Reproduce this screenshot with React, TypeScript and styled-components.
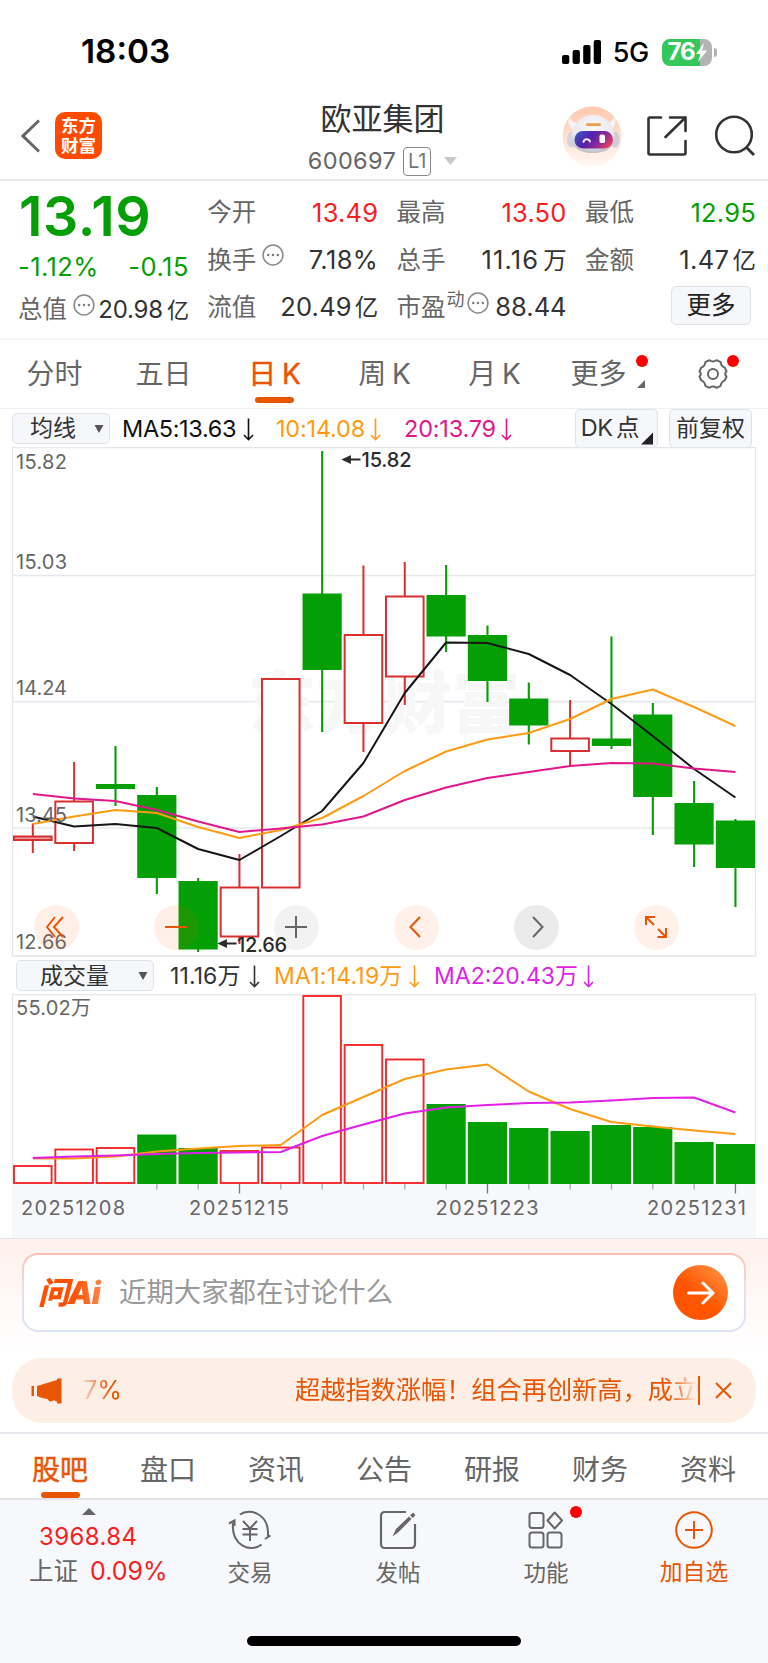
import React from "react";
import styled, { createGlobalStyle } from "styled-components";

const CJK = `Inter, "Noto Sans CJK SC", sans-serif`;
const ORANGE = "#ea5504";
const GREEN = "#049f04";
const RED = "#f8201f";

const Global = createGlobalStyle`
  * { box-sizing: border-box; }
  body { margin: 0; background: #fff; font-family: ${CJK}; color: #333; }
  svg { display: block; flex: none; }
`;

const Screen = styled.div`
  width: 768px;
  height: 1663px;
  overflow: hidden;
  display: flex;
  flex-direction: column;
  background: #fff;
`;

const Txt = styled.span<{ $s: number; $c?: string; $w?: number; $ls?: number; $ml?: number }>`
  font-size: ${(p) => p.$s}px;
  line-height: 1;
  color: ${(p) => p.$c || "#333"};
  font-weight: ${(p) => p.$w || 400};
  letter-spacing: ${(p) => p.$ls || 0}px;
  margin-left: ${(p) => p.$ml || 0}px;
  white-space: nowrap;
`;

/* status bar */
const StatusBar = styled.div`
  height: 102px;
  padding: 2px 51px 0 81px;
  display: flex;
  justify-content: space-between;
  align-items: center;
  flex: none;
`;
const StatusRight = styled.div`
  display: flex;
  align-items: center;
`;
const Battery = styled.div`
  width: 50px;
  height: 27px;
  border-radius: 8px;
  margin-left: 13px;
  background: linear-gradient(90deg, #34c759 76%, #b3b3b3 76%);
  display: flex;
  align-items: center;
  justify-content: center;
`;
const BatteryTip = styled.div`
  width: 3px;
  height: 9px;
  margin-left: 2px;
  border-radius: 0 3px 3px 0;
  background: #b3b3b3;
`;

/* header */
const Header = styled.header`
  height: 79px;
  flex: none;
  border-bottom: 2px solid #ebebed;
  display: grid;
  grid-template-columns: 240px 1fr 240px;
`;
const HeaderLeft = styled.div`
  display: flex;
  align-items: center;
  padding: 0 0 10px 21px;
  gap: 15px;
  height: 77px;
`;
const Logo = styled.div`
  width: 47px;
  height: 47px;
  border-radius: 10px;
  background: #ff4a00;
  display: flex;
  flex-direction: column;
  align-items: center;
  justify-content: center;
  gap: 2px;
`;
const HeaderTitle = styled.div`
  display: flex;
  flex-direction: column;
  align-items: center;
  padding: 1px 3px 0 0;
`;
const CodeRow = styled.div`
  display: flex;
  align-items: center;
  margin-top: 12px;
  height: 30px;
`;
const LevelBadge = styled.div`
  width: 28px;
  height: 29px;
  margin: 0 13px 0 7px;
  border: 1.5px solid #8a8a8a;
  border-radius: 4px;
  display: flex;
  align-items: center;
  justify-content: center;
`;
const HeaderRight = styled.div`
  display: flex;
  align-items: flex-start;
  justify-content: flex-end;
  padding: 4px 12px 0 0;
`;

/* quote */
const Quote = styled.section`
  height: 159px;
  flex: none;
  border-bottom: 2px solid #f3f3f5;
  padding: 0 12px 0 18px;
  display: grid;
  grid-template-columns: 171px 171px 170px 171px;
  column-gap: 18.3px;
`;
const QuoteCol = styled.div`
  display: flex;
  flex-direction: column;
  padding-top: 8px;
`;
const PriceBox = styled.div`
  height: 58px;
  display: flex;
  align-items: center;
  padding: 0 0 4px 1px;
`;
const QuoteRow = styled.div<{ $h?: number; $end?: boolean }>`
  height: ${(p) => p.$h || 47.3}px;
  display: flex;
  align-items: center;
  justify-content: ${(p) => (p.$end ? "flex-end" : "space-between")};
  padding: ${(p) => (p.$end ? "0 5px 3px 0" : "0")};
`;
const Label = styled.span`
  font-size: 24.5px;
  line-height: 1;
  color: #666;
  display: flex;
  align-items: center;
  white-space: nowrap;
`;
const InfoIcon = styled.span<{ $ml?: number }>`
  display: inline-flex;
  margin: 0 0 9px ${(p) => p.$ml ?? 6}px;
`;
const Sup = styled.span`
  font-size: 18px;
  margin: 0 0 15px 1px;
`;
const Unit = styled.span<{ $ml: number }>`
  font-size: 0.92em;
  letter-spacing: 0;
  margin-left: ${(p) => p.$ml}px;
`;
const SoftButton = styled.div<{ $w: number; $h: number; $ml?: number; $pr?: number }>`
  width: ${(p) => p.$w}px;
  height: ${(p) => p.$h}px;
  margin-left: ${(p) => p.$ml || 0}px;
  padding-right: ${(p) => p.$pr || 0}px;
  border: 1px solid #dfe1e8;
  border-radius: 5px;
  background: #f6f7fa;
  display: flex;
  align-items: center;
  justify-content: center;
  position: relative;
  flex: none;
  word-spacing: -3px;
`;

/* period tabs */
const Periods = styled.nav`
  height: 69px;
  border-bottom: 1px solid #f0f0f2;
  display: grid;
  grid-template-columns: 109px 109px 113px 107px 113px 95px 134px;
  flex: none;
`;
const Period = styled.div<{ $on?: boolean }>`
  position: relative;
  display: flex;
  align-items: center;
  justify-content: center;
  font-size: 28px;
  line-height: 1;
  padding-bottom: 1px;
  color: ${(p) => (p.$on ? ORANGE : "#666")};
  -webkit-text-stroke: ${(p) => (p.$on ? "0.45px" : "0")};
  white-space: nowrap;
  word-spacing: -2px;
`;
const Underline = styled.i<{ $b: number; $w: number }>`
  position: absolute;
  bottom: ${(p) => p.$b}px;
  left: 50%;
  margin-left: ${(p) => -p.$w / 2}px;
  width: ${(p) => p.$w}px;
  height: 6px;
  border-radius: 3px;
  background: ${ORANGE};
`;
const Dot = styled.i<{ $x: number; $y: number }>`
  position: absolute;
  left: ${(p) => p.$x}px;
  top: ${(p) => p.$y}px;
  width: 12px;
  height: 12px;
  border-radius: 50%;
  background: #fe0000;
`;
const Corner = styled.i<{ $x: number; $y: number; $s: number; $c: string }>`
  position: absolute;
  left: ${(p) => p.$x}px;
  top: ${(p) => p.$y}px;
  width: ${(p) => p.$s}px;
  height: ${(p) => p.$s}px;
  background: ${(p) => p.$c};
  clip-path: polygon(100% 0, 100% 100%, 0 100%);
`;

/* indicator rows */
const IndicatorRow = styled.div<{ $h: number; $pl: number }>`
  height: ${(p) => p.$h}px;
  padding-left: ${(p) => p.$pl}px;
  display: flex;
  align-items: center;
  flex: none;
`;
const Select = styled.div<{ $w: number }>`
  width: ${(p) => p.$w}px;
  height: 31px;
  border: 1px solid #dfe1e8;
  border-radius: 5px;
  background: #f6f7fa;
  display: flex;
  align-items: center;
  justify-content: space-between;
  padding: 1px 5px 0 ${(p) => (p.$w > 120 ? 23 : 17)}px;
  flex: none;
`;
const Item = styled.div<{ $w: number; $ml: number }>`
  width: ${(p) => p.$w}px;
  margin-left: ${(p) => p.$ml}px;
  padding-top: 2px;
  display: flex;
  align-items: center;
  justify-content: space-between;
  flex: none;
`;

const ChartWrap = styled.div`
  position: relative;
  flex: none;
`;
const ChartButtons = styled.div`
  position: absolute;
  left: 33.5px;
  top: 457.5px;
  display: flex;
  gap: 75px;
`;
const RoundButton = styled.div<{ $bg: string }>`
  width: 45px;
  height: 45px;
  border-radius: 50%;
  background: ${(p) => p.$bg};
  display: flex;
  align-items: center;
  justify-content: center;
`;

/* AI prompt and notice */
const AiSection = styled.section`
  height: 196px;
  flex: none;
  border-top: 1px solid #e3e2ea;
  border-bottom: 2px solid #e8e8ee;
  background: linear-gradient(180deg, #fff1ec 0, #ffffff 112px);
  padding: 14px 12px 0;
`;
const AiBorder = styled.div`
  margin: 0 10px;
  height: 79px;
  border-radius: 16px;
  padding: 2px;
  background: linear-gradient(180deg, #ffbdb2 0, #f0dbe4 40%, #dbe3f6 100%);
`;
const AiBox = styled.div`
  height: 75px;
  border-radius: 14px;
  background: #fff;
  display: flex;
  align-items: center;
  padding: 0 16px 0 14px;
`;
const AiLogo = styled.span`
  width: 67px;
  font-size: 31px;
  line-height: 1.2;
  font-weight: 900;
  font-style: italic;
  letter-spacing: -1px;
  white-space: nowrap;
  color: transparent;
  background: linear-gradient(90deg, #ff5000 50%, #ff8a50);
  background-clip: text;
  -webkit-background-clip: text;
`;
const Go = styled.div`
  width: 55px;
  height: 55px;
  margin-left: auto;
  border-radius: 50%;
  background: linear-gradient(40deg, #ff5500 45%, #ff9a4c);
  display: flex;
  align-items: center;
  justify-content: center;
`;
const Notice = styled.div`
  margin-top: 26px;
  height: 65px;
  border-radius: 30px;
  background: #fdeee6;
  display: flex;
  align-items: center;
  padding: 0 23px 0 19px;
`;
const Ticker = styled.div`
  width: 620px;
  margin-left: 16px;
  display: flex;
  justify-content: space-between;
  padding: 6px 0 6px 5px;
  mask-image: linear-gradient(90deg, transparent 0, #000 32px, #000 592px, transparent 619px);
`;
const Bar = styled.i`
  width: 1.5px;
  height: 29px;
  background: ${ORANGE};
`;

/* section tabs */
const Sections = styled.nav`
  height: 66px;
  flex: none;
  border-bottom: 2px solid #e3e4e7;
  display: grid;
  grid-template-columns: repeat(7, 108px);
  padding-left: 6px;
`;
const Section = styled(Period)`
  padding-bottom: 0;
  padding-top: 8px;
`;

/* bottom bar */
const Bottom = styled.footer`
  height: 163px;
  flex: none;
  background: #f7f8fb;
  display: flex;
  flex-direction: column;
  justify-content: space-between;
  align-items: center;
  padding-bottom: 17px;
`;
const Actions = styled.div`
  width: 768px;
  display: grid;
  grid-template-columns: 176px 148px 148px 148px 148px;
`;
const Action = styled.div`
  display: flex;
  flex-direction: column;
  align-items: center;
  position: relative;
  padding-top: 10px;
  height: 84px;
  justify-content: space-between;
`;
const IndexAction = styled(Action)`
  align-items: flex-start;
  padding-top: 8px;
`;
const UpMark = styled.i`
  width: 14px;
  height: 7px;
  margin-left: 82px;
  background: #666;
  clip-path: polygon(50% 0, 100% 100%, 0 100%);
`;
const IndexRow = styled.div`
  display: flex;
  align-items: center;
  gap: 12px;
  padding-left: 29px;
`;
const HomeBar = styled.div`
  width: 274px;
  height: 10px;
  border-radius: 5px;
  background: #000;
`;

const Info = ({ ml }: { ml?: number }) => (
  <InfoIcon $ml={ml}>
    <svg width="22" height="22" viewBox="0 0 22 22">
      <circle cx="11" cy="11" r="9.9" fill="none" stroke="#888" strokeWidth="1.5" />
      <g fill="#777"><circle cx="6.2" cy="11" r="1.2" /><circle cx="11" cy="11" r="1.2" /><circle cx="15.8" cy="11" r="1.2" /></g>
    </svg>
  </InfoIcon>
);
const Value = ({ n, u, c, gap = 3, ls = 0.2 }: { n: string; u?: string; c?: string; gap?: number; ls?: number }) => (
  <Txt $s={25.5} $c={c} $ls={ls}>{n}{u && <Unit $ml={gap}>{u}</Unit>}</Txt>
);
const Down = ({ c }: { c: string }) => (
  <svg width="11" height="23" viewBox="0 0 11 23" fill="none" stroke={c} strokeWidth="1.6">
    <path d="M5.5 0.5V21.5M1 17L5.5 21.7L10 17" />
  </svg>
);
const Caret = () => (
  <svg width="10" height="8" viewBox="0 0 10 8"><path d="M0.5 0H9.5L5 8Z" fill="#555" /></svg>
);

const Robot = () => (
  <svg width="60" height="61" viewBox="0 0 60 61">
    <defs>
      <linearGradient id="halo" x1="0" y1="0" x2="0" y2="1"><stop offset="0" stopColor="#ffc9ae" /><stop offset="1" stopColor="#fff8f4" /></linearGradient>
      <linearGradient id="visor" x1="0" y1="0.2" x2="1" y2="0.6"><stop offset="0" stopColor="#3a55c4" /><stop offset="0.4" stopColor="#5420a8" /><stop offset="0.7" stopColor="#8a2a9c" /><stop offset="1" stopColor="#e0455c" /></linearGradient>
      <radialGradient id="shell" cx="0.5" cy="0.3" r="0.75"><stop offset="0" stopColor="#f8f8fa" /><stop offset="0.65" stopColor="#e9e8ed" /><stop offset="1" stopColor="#b5b5c0" /></radialGradient>
    </defs>
    <ellipse cx="30" cy="30.5" rx="29.5" ry="30" fill="url(#halo)" />
    <path d="M13 24C7 21 5 16 7.5 11.5C9 15 12 17 16 17ZM47 24C53 21 55 16 52.5 11C51 15 48 17 44 17Z" fill="#f6f4f6" />
    <ellipse cx="9.5" cy="33.5" rx="4.5" ry="8" fill="#d6d4dc" />
    <ellipse cx="53" cy="33.5" rx="4.5" ry="8" fill="#cfccd6" />
    <path d="M31 9C42 9 49 16 52 25C55 38 48 47 31 47C15 47 7 39 10 26C13 16 20 9 31 9Z" fill="url(#shell)" />
    <rect x="24" y="17.3" width="15" height="2.8" rx="1.4" fill="#ee9a4e" />
    <rect x="12.5" y="25" width="38.5" height="17.5" rx="8.5" fill="url(#visor)" />
    <path d="M21.5 36C22 32.5 27 32.5 28 35.5" fill="none" stroke="#f4eaff" strokeWidth="1.9" strokeLinecap="round" />
    <rect x="37.5" y="28.5" width="5.5" height="8.5" rx="1.8" fill="#fff" />
  </svg>
);

const CANDLE_RED = "#d82f31";
const cx = (i: number) => 32.8 + 41.33 * i;

/* [rising, body top, body bottom, high, low] */
const candles: [number, number, number, number, number][] = [
  [1, 836.5, 840, 823.5, 853], [1, 801.5, 843, 762, 851], [0, 784, 789, 746, 806],
  [0, 795, 878, 787, 894], [0, 881, 949.5, 878, 952], [1, 887.5, 936.5, 854, 944],
  [1, 679, 887.5, 679, 887], [0, 593.5, 670, 451, 732], [1, 635, 723, 565.5, 752],
  [1, 596.5, 676.5, 562, 705], [0, 595, 636.5, 565, 652], [0, 635, 681, 625.5, 702],
  [0, 698.5, 725.5, 682.5, 744.5], [1, 738.5, 751, 700, 766], [0, 738.5, 746, 636.5, 749],
  [0, 714.5, 797, 703, 835], [0, 803, 844.5, 781, 867], [0, 820.5, 868, 819, 907],
];
const ma5 = [816.5, 826.5, 824, 828, 849, 860, 836, 811, 763, 693, 642.5, 643, 654, 675, 704, 736, 769, 797.5];
const ma10 = [824, 816.5, 810, 813, 827, 838, 830, 818, 796, 771, 751.5, 739.5, 733, 719, 699, 689.5, 707, 726];
const ma20 = [794, 798.5, 801, 810, 821.5, 832, 828.5, 824.5, 816.5, 800, 787.5, 778, 772, 766, 763, 763.5, 768.5, 772];
const vols = [1166, 1149.5, 1148, 1134.5, 1148, 1151, 1147.5, 996, 1045, 1059.5, 1104, 1122, 1128, 1131, 1125, 1127, 1142, 1144];
const risingVols = [0, 1, 2, 5, 6, 7, 8, 9];
const vma1 = [1158.5, 1158.5, 1156.5, 1151.5, 1148.5, 1146, 1145, 1115, 1097, 1079, 1069.5, 1064.5, 1091.5, 1109, 1122, 1126.5, 1130.5, 1134];
const vma2 = [1158, 1156.5, 1155.5, 1154, 1153, 1152.5, 1152, 1136, 1124.5, 1113.5, 1107.5, 1105, 1103, 1102.5, 1100.5, 1098, 1097.5, 1112.5];

const Line = ({ ys, c }: { ys: number[]; c: string }) => (
  <polyline points={ys.map((y, i) => `${cx(i)},${y}`).join(" ")} fill="none" stroke={c} strokeWidth="2" strokeLinejoin="round" />
);

const AxisText = styled.text`
  font-family: ${CJK};
  font-size: 20px;
  fill: #666;
`;
const MarkText = styled(AxisText)`
  fill: #2b2b2b;
  font-weight: 500;
`;

const PriceChart = () => (
  <svg width="768" height="510" viewBox="0 447 768 510">
    <g fill="none" stroke="#e3e5ea" strokeWidth="1.3">
      <path d="M12.5 447.5H755.5V956H12.5Z" />
      <path d="M12.5 575.5H755.5M12.5 701.7H755.5M12.5 828H755.5" strokeWidth="1.7" stroke="#e6e9ef" />
    </g>
    <text x="248" y="728" fontSize="68" fontWeight="900" fontFamily="Noto Sans CJK SC" fill="#f7f7f7" textLength="272">东方财富</text>
    {candles.map(([up, t, b, hi, lo], i) =>
      up ? (
        <g key={i} stroke={CANDLE_RED} strokeWidth="2" fill="none">
          <path d={`M${cx(i)} ${hi}V${t}M${cx(i)} ${b}V${lo}`} />
          <rect x={cx(i) - 18.8} y={t} width="37.6" height={b - t} fill={b - t < 5 ? "#e9a0a0" : "#fff"} />
        </g>
      ) : (
        <g key={i} fill={GREEN}>
          <rect x={cx(i) - 1} y={hi} width="2.1" height={lo - hi} />
          <rect x={cx(i) - 19.6} y={t} width="39.2" height={b - t} />
        </g>
      )
    )}
    <Line ys={ma5} c="#161616" />
    <Line ys={ma10} c="#ff9b12" />
    <Line ys={ma20} c="#e1178b" />
    <AxisText x="16" y="469" textLength="51">15.82</AxisText>
    <AxisText x="16" y="568.5" textLength="51">15.03</AxisText>
    <AxisText x="16" y="695" textLength="51">14.24</AxisText>
    <AxisText x="16" y="822" textLength="51">13.45</AxisText>
    <AxisText x="16" y="948.5" textLength="51">12.66</AxisText>
    <path d="M349 459.5H360.5M350 456.5L343.5 459.5L350 462.5Z" stroke="#2b2b2b" strokeWidth="1.8" fill="#2b2b2b" />
    <MarkText x="361.5" y="467" textLength="50">15.82</MarkText>
    <path d="M225 943.5H236.5M226 940.5L219.5 943.5L226 946.5Z" stroke="#2b2b2b" strokeWidth="1.8" fill="#2b2b2b" />
    <MarkText x="237" y="951.5" textLength="50">12.66</MarkText>
  </svg>
);

const VolumeChart = () => (
  <svg width="768" height="244" viewBox="0 994 768 244">
    <rect x="12" y="1184" width="744" height="54" fill="#f7f8fb" />
    <path d="M12.5 1184V994.5H755.5V1184" fill="none" stroke="#e3e5ea" strokeWidth="1.3" />
    {vols.map((y, i) =>
      risingVols.includes(i) ? (
        <rect key={i} x={cx(i) - 18.8} y={y} width="37.6" height={1183 - y} fill="none" stroke="#f4282a" strokeWidth="1.9" />
      ) : (
        <rect key={i} x={cx(i) - 19.6} y={y} width="39.2" height={1184 - y} fill={GREEN} />
      )
    )}
    {vols.map((_, i) =>
      i < 3 ? null : (
        <rect key={i} x={cx(i) - 0.6} y="1184" width="1.3" height={i % 6 === 5 ? 9.5 : 5.5} fill={i % 6 === 5 ? "#777" : "#aaa"} />
      )
    )}
    <Line ys={vma1} c="#ff9b12" />
    <Line ys={vma2} c="#e11fe6" />
    <AxisText x="16" y="1014.5" textLength="75">55.02万</AxisText>
    <AxisText x="21" y="1214.5" textLength="104">20251208</AxisText>
    <AxisText x="189" y="1214.5" textLength="100">20251215</AxisText>
    <AxisText x="435.5" y="1214.5" textLength="103">20251223</AxisText>
    <AxisText x="647" y="1214.5" textLength="99">20251231</AxisText>
  </svg>
);

const stroke = (c: string, w = 2) => ({ fill: "none", stroke: c, strokeWidth: w });
const ShareIcon = styled.svg`
  margin: 10px 0 0 25px;
`;
const SearchIcon = styled.svg`
  margin: 9px 0 0 28px;
`;
const CloseIcon = styled.svg`
  margin-left: 15px;
`;

export default function App() {
  return (
    <Screen>
      <Global />
      <StatusBar>
        <Txt $s={33.3} $w={600} $c="#000">18:03</Txt>
        <StatusRight>
          <svg width="39" height="24" viewBox="0 0 39 24">
            <rect x="0" y="15" width="7.3" height="9" rx="2" /><rect x="10.6" y="10" width="7.3" height="14" rx="2" />
            <rect x="21.2" y="5" width="7.3" height="19" rx="2" /><rect x="31.7" y="0" width="7.3" height="24" rx="2" />
          </svg>
          <Txt $s={27} $w={450} $c="#000" $ml={12} $ls={-0.3}>5G</Txt>
          <Battery>
            <Txt $s={24} $w={700} $c="#fff" $ls={-1}>76</Txt>
            <svg width="12" height="19" viewBox="0 0 12 19"><path d="M9 0L1 11H5.5L3 19L12 7.5H7.2Z" fill="#fff" /></svg>
          </Battery>
          <BatteryTip />
        </StatusRight>
      </StatusBar>

      <Header>
        <HeaderLeft>
          <svg width="19" height="34" viewBox="0 0 19 34"><path d="M18 1.5L2 17L18 32.5" {...stroke("#666", 3)} /></svg>
          <Logo>
            <Txt $s={17.5} $w={700} $c="#fff">东方</Txt>
            <Txt $s={17.5} $w={700} $c="#fff">财富</Txt>
          </Logo>
        </HeaderLeft>
        <HeaderTitle>
          <Txt $s={31}>欧亚集团</Txt>
          <CodeRow>
            <Txt $s={23.5} $c="#666" $ls={0.35}>600697</Txt>
            <LevelBadge><Txt $s={20} $c="#777">L1</Txt></LevelBadge>
            <svg width="13" height="8" viewBox="0 0 13 8"><path d="M0 0H13L6.5 8Z" fill="#c8c8c8" /></svg>
          </CodeRow>
        </HeaderTitle>
        <HeaderRight>
          <Robot />
          <ShareIcon width="40" height="40" viewBox="0 0 40 40">
            <g {...stroke("#333", 2.6)} strokeLinecap="round" strokeLinejoin="round">
              <path d="M14 1.5H3Q1.5 1.5 1.5 3V37Q1.5 38.5 3 38.5H37Q38.5 38.5 38.5 37V25" />
              <path d="M23 1.5H38.5V15M38.5 1.5L18.5 21" />
            </g>
          </ShareIcon>
          <SearchIcon width="41" height="41" viewBox="0 0 41 41">
            <circle cx="19" cy="19.5" r="17.8" {...stroke("#333", 2.6)} /><path d="M31.5 32.5L39 40" {...stroke("#333", 2.8)} />
          </SearchIcon>
        </HeaderRight>
      </Header>

      <Quote>
        <QuoteCol>
          <PriceBox><Txt $s={55.5} $w={600} $c={GREEN} $ls={0.6}>13.19</Txt></PriceBox>
          <QuoteRow $h={39}><Value n="-1.12%" c={GREEN} ls={0.4} /><Value n="-0.15" c={GREEN} ls={0.5} /></QuoteRow>
          <QuoteRow><Label>总值<Info /></Label><Txt $s={24} $ls={-0.2}>20.98<Unit $ml={4}>亿</Unit></Txt></QuoteRow>
        </QuoteCol>
        <QuoteCol>
          <QuoteRow><Label>今开</Label><Value n="13.49" c={RED} /></QuoteRow>
          <QuoteRow><Label>换手<Info /></Label><Value n="7.18%" ls={0.4} /></QuoteRow>
          <QuoteRow><Label>流值</Label><Value n="20.49" u="亿" /></QuoteRow>
        </QuoteCol>
        <QuoteCol>
          <QuoteRow><Label>最高</Label><Value n="13.50" c={RED} /></QuoteRow>
          <QuoteRow><Label>总手</Label><Value n="11.16" u="万" gap={4} ls={1.1} /></QuoteRow>
          <QuoteRow><Label>市盈<Sup>动</Sup><Info ml={2} /></Label><Value n="88.44" ls={0} /></QuoteRow>
        </QuoteCol>
        <QuoteCol>
          <QuoteRow><Label>最低</Label><Value n="12.95" c={GREEN} /></QuoteRow>
          <QuoteRow><Label>金额</Label><Value n="1.47" u="亿" gap={3} ls={0.4} /></QuoteRow>
          <QuoteRow $end>
            <SoftButton $w={80} $h={39}><Txt $s={24.5} $c="#222">更多</Txt></SoftButton>
          </QuoteRow>
        </QuoteCol>
      </Quote>

      <Periods>
        <Period>分时</Period>
        <Period>五日</Period>
        <Period $on>日 K<Underline $b={5} $w={39} /></Period>
        <Period>周 K</Period>
        <Period>月 K</Period>
        <Period>更多<Dot $x={85} $y={15} /><Corner $x={86} $y={40} $s={8} $c="#666" /></Period>
        <Period>
          <svg width="32" height="32" viewBox="0 0 32 32">
            <path d="M12.5 2.2Q16 4.6 19.5 2.2L23.7 4.2Q24 8.2 27.8 9.6L29.5 13.5Q26.8 16 29.5 18.5L27.8 22.4Q24 23.8 23.7 27.8L19.5 29.8Q16 27.4 12.5 29.8L8.3 27.8Q8 23.8 4.2 22.4L2.5 18.5Q5.2 16 2.5 13.5L4.2 9.6Q8 8.2 8.3 4.2Z" {...stroke("#666", 2)} strokeLinejoin="round" />
            <circle cx="16" cy="16" r="5" {...stroke("#666", 2)} />
          </svg>
          <Dot $x={81} $y={15} />
        </Period>
      </Periods>

      <IndicatorRow $h={38} $pl={12}>
        <Select $w={98}><Txt $s={23}>均线</Txt><Caret /></Select>
        <Item $w={132} $ml={12}><Txt $s={23.5} $c="#111" $ls={-0.35}>MA5:13.63</Txt><Down c="#111" /></Item>
        <Item $w={105} $ml={22}><Txt $s={23.5} $c="#ff9b12" $ls={-0.2}>10:14.08</Txt><Down c="#ff9b12" /></Item>
        <Item $w={108} $ml={23}><Txt $s={23.5} $c="#e1178b" $ls={-0.2}>20:13.79</Txt><Down c="#e1178b" /></Item>
        <SoftButton $w={83} $h={39} $ml={63} $pr={13}>
          <Txt $s={23.5} $ls={-0.3}>DK 点</Txt><Corner $x={65} $y={23} $s={12} $c="#222" />
        </SoftButton>
        <SoftButton $w={83} $h={39} $ml={11}><Txt $s={23}>前复权</Txt></SoftButton>
      </IndicatorRow>

      <ChartWrap>
        <PriceChart />
        <ChartButtons>
          <RoundButton $bg="rgba(255,100,20,.1)"><svg width="20" height="22" viewBox="0 0 20 22" {...stroke(ORANGE, 2)}><path d="M9 1L1 11L9 21M17 1L8 11L17 21" /></svg></RoundButton>
          <RoundButton $bg="rgba(255,100,20,.1)"><svg width="22" height="2" viewBox="0 0 22 2"><path d="M0 1H22" {...stroke(ORANGE, 2)} /></svg></RoundButton>
          <RoundButton $bg="rgba(0,0,0,.05)"><svg width="22" height="22" viewBox="0 0 22 22"><path d="M0 11H22M11 0V22" {...stroke("#666", 2)} /></svg></RoundButton>
          <RoundButton $bg="#fff0e9"><svg width="15" height="22" viewBox="0 0 15 22"><path d="M11 1L1.5 11L11 21" {...stroke(ORANGE, 2)} /></svg></RoundButton>
          <RoundButton $bg="#ebebeb"><svg width="15" height="22" viewBox="-3 0 15 22"><path d="M1 1L10.5 11L1 21" {...stroke("#666", 2)} /></svg></RoundButton>
          <RoundButton $bg="#fff0e9"><svg width="24" height="24" viewBox="0 0 24 24" {...stroke(ORANGE, 2)}><path d="M2 10V2H11M2 2L10 10M22 13V22H13.5M22 22L14 14" /></svg></RoundButton>
        </ChartButtons>
      </ChartWrap>

      <IndicatorRow $h={37} $pl={16}>
        <Select $w={138}><Txt $s={23}>成交量</Txt><Caret /></Select>
        <Item $w={90} $ml={16}><Txt $s={23} $ls={0.1}>11.16万</Txt><Down c="#333" /></Item>
        <Item $w={146} $ml={14}><Txt $s={23} $c="#ff9b12" $ls={0.2}>MA1:14.19万</Txt><Down c="#ff9b12" /></Item>
        <Item $w={160} $ml={14}><Txt $s={23} $c="#e11fe6">MA2:20.43万</Txt><Down c="#e11fe6" /></Item>
      </IndicatorRow>
      <ChartWrap><VolumeChart /></ChartWrap>

      <AiSection>
        <AiBorder>
          <AiBox>
            <AiLogo>问Ai</AiLogo>
            <Txt $s={27.4} $c="#999" $ml={14}>近期大家都在讨论什么</Txt>
            <Go><svg width="28" height="24" viewBox="0 0 28 24"><path d="M1.5 12H26M16 2L26 12L16 22" {...stroke("#fff", 3)} strokeLinecap="round" strokeLinejoin="round" /></svg></Go>
          </AiBox>
        </AiBorder>
        <Notice>
          <svg width="31" height="26" viewBox="0 0 31 26" fill={ORANGE}><path d="M0.5 8H3V18H0.5ZM6 8L26 2V0.5H30.5V25.5H26V23.5L22 22V23L18.5 23.5L16.5 21L11 20L6 18Z" /></svg>
          <Ticker>
            <Txt $s={25.2} $c={ORANGE}>7%</Txt>
            <Txt $s={25.2} $c={ORANGE}>超越指数涨幅！组合再创新高，成立</Txt>
          </Ticker>
          <Bar />
          <CloseIcon width="17" height="17" viewBox="0 0 17 17"><path d="M1 1L16 16M16 1L1 16" {...stroke(ORANGE, 2)} /></CloseIcon>
        </Notice>
      </AiSection>

      <Sections>
        <Section $on>股吧<Underline $b={0} $w={39} /></Section>
        {["盘口", "资讯", "公告", "研报", "财务", "资料"].map((t) => <Section key={t}>{t}</Section>)}
      </Sections>

      <Bottom>
        <Actions>
          <IndexAction>
            <UpMark />
            <Txt $s={24} $c={RED} $ml={39} $ls={0.4}>3968.84</Txt>
            <IndexRow><Txt $s={24.5} $c="#666">上证</Txt><Txt $s={25} $c={RED}>0.09%</Txt></IndexRow>
          </IndexAction>
          <Action>
            <svg width="44" height="40" viewBox="0 0 44 40" {...stroke("#666", 2)}>
              <path d="M12 4.5C22 -2.5 41 4 40 25M37 29L42.5 25.5M40 27.5V22M33.5 34.5C23 43 3 36 5 13M1 13.5L6.5 10.5V16" />
              <path d="M15 11L22 18.5L29 11M14.5 19H29.5M14.5 24.5H29.5M22 18.5V31" />
            </svg>
            <Txt $s={22.5} $c="#666">交易</Txt>
          </Action>
          <Action>
            <svg width="38" height="40" viewBox="0 0 38 40" {...stroke("#666", 2.2)}>
              <path d="M27 2H6Q2 2 2 6V34Q2 38 6 38H32Q36 38 36 34V14" />
              <path d="M13.5 26.5L17 19L30 6.5L32.5 9L19 22.5ZM34 2.5L36.5 5L34 8L31 5.5Z" fill="#666" stroke="none" />
            </svg>
            <Txt $s={22.5} $c="#666">发帖</Txt>
          </Action>
          <Action>
            <svg width="36" height="40" viewBox="0 0 36 40" {...stroke("#666", 2)}>
              <rect x="1.5" y="3" width="14" height="15" rx="2.5" /><rect x="1.5" y="22.5" width="14" height="15" rx="2.5" /><rect x="19.5" y="22.5" width="14" height="15" rx="2.5" />
              <path d="M26.7 2.5L34 10.5L26.7 18.5L19.5 10.5Z" strokeLinejoin="round" />
            </svg>
            <Dot $x={98} $y={6} />
            <Txt $s={22.5} $c="#666">功能</Txt>
          </Action>
          <Action>
            <svg width="38" height="40" viewBox="0 0 38 40" {...stroke(ORANGE, 2)}><circle cx="19" cy="20" r="17.8" /><path d="M10 20H28M19 11V29" /></svg>
            <Txt $s={22.8} $c={ORANGE}>加自选</Txt>
          </Action>
        </Actions>
        <HomeBar />
      </Bottom>
    </Screen>
  );
}
